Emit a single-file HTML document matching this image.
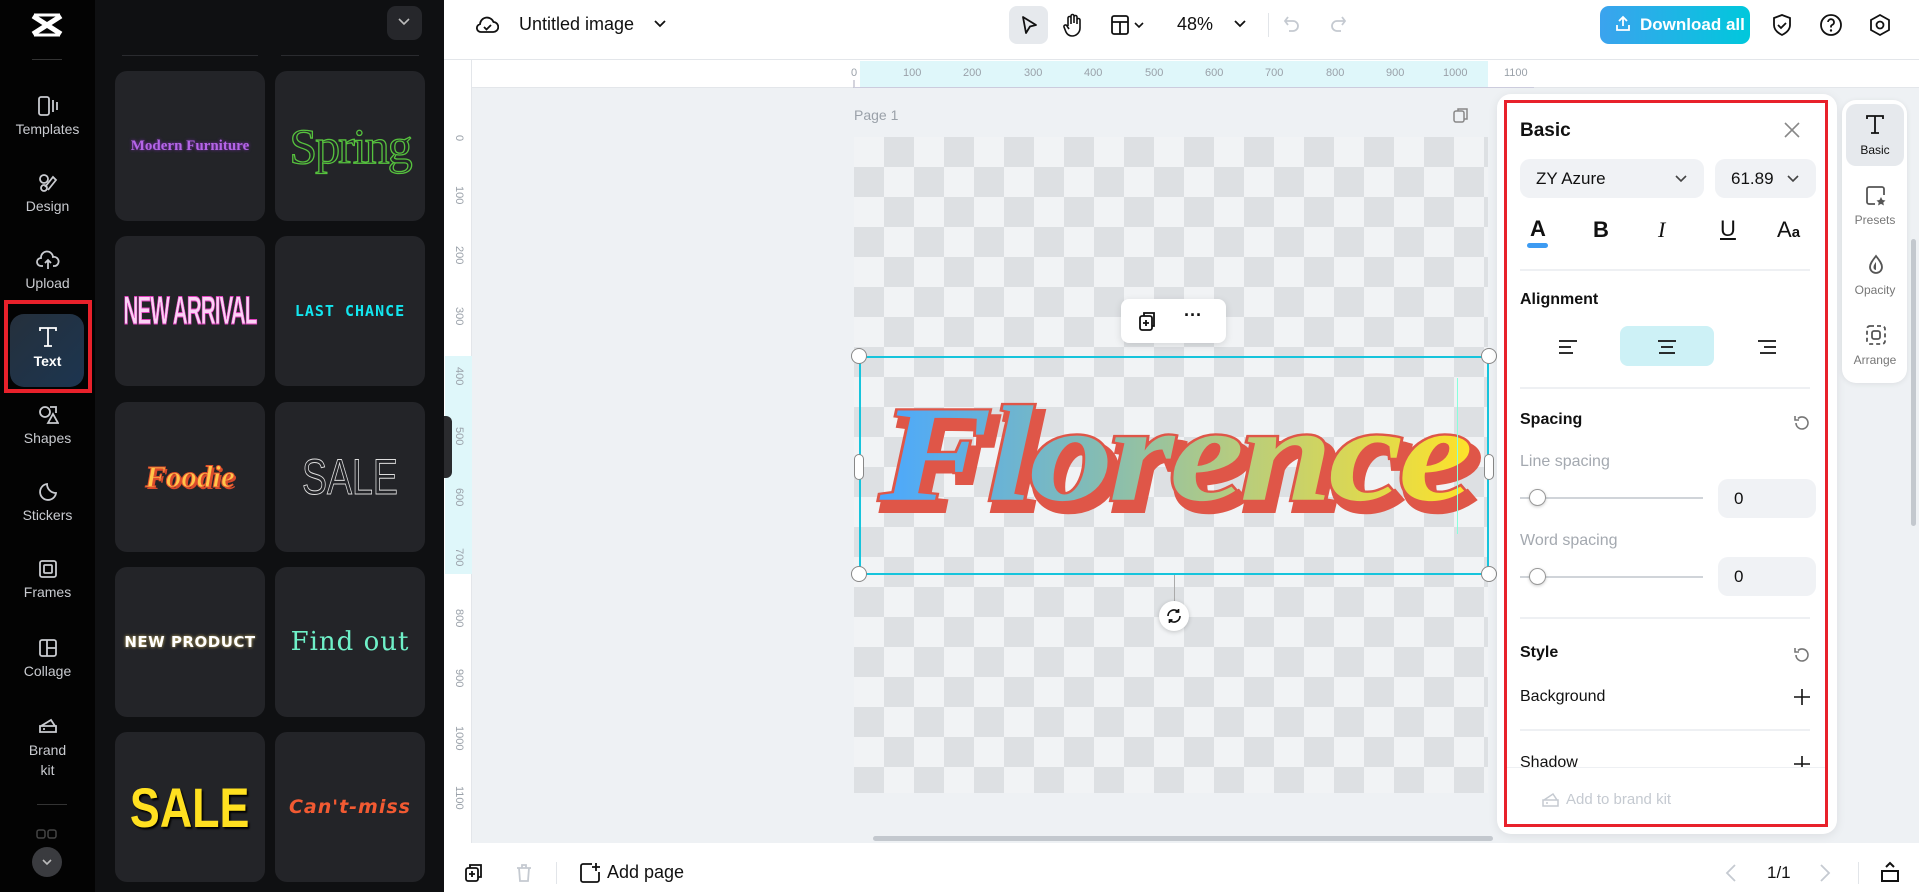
<!DOCTYPE html>
<html><head><meta charset="utf-8">
<style>
*{box-sizing:border-box;margin:0;padding:0}
body{width:1919px;height:892px;overflow:hidden;position:relative;font-family:"Liberation Sans",sans-serif;background:#eef1f4}
.a{position:absolute}
.nav{left:0;top:0;width:95px;height:892px;background:#030303}
.ni{position:absolute;left:0;width:95px;text-align:center;color:#c9cbd0;font-size:14px}
.ni svg{display:block;margin:0 auto 4px}
.panel{left:95px;top:0;width:349px;height:892px;background:#0f1012}
.card{position:absolute;width:150px;height:150px;background:#232428;border-radius:12px;display:flex;align-items:center;justify-content:center;overflow:hidden}
.card span{display:inline-block;white-space:nowrap}
.top{left:444px;top:0;width:1475px;height:60px;background:#fff;border-bottom:1px solid #e3e6ea}
.rp{left:1504px;top:100px;width:324px;height:727px;background:#fff;border:3px solid #e8212b}
.lbl{position:absolute;left:13px;font-size:16px;color:#111;font-weight:bold}
.dv{position:absolute;left:13px;width:290px;height:2px;background:#eef0f3}
.in{position:absolute;background:#f0f2f5;border-radius:10px;font-size:17px;color:#111}
</style></head><body>

<div class="a nav">
 <svg class="a" style="left:30px;top:12px" width="34" height="26" viewBox="0 0 34 26"><path d="M3 4 L31 22 M31 4 L3 22" stroke="#fff" stroke-width="5"/><path d="M4 3h26M4 23h26" stroke="#fff" stroke-width="3"/></svg>
 <div class="a" style="left:32px;top:59px;width:30px;height:1px;background:#333"></div>
 <div class="ni" style="top:95px"><svg width="22" height="22" viewBox="0 0 22 22" fill="none" stroke="#c9cbd0" stroke-width="1.8"><rect x="2" y="2" width="10" height="18" rx="2"/><path d="M16 5v12M20 7v8"/></svg>Templates</div>
 <div class="ni" style="top:172px"><svg width="22" height="22" viewBox="0 0 22 22" fill="none" stroke="#c9cbd0" stroke-width="1.8"><circle cx="7" cy="7" r="4"/><circle cx="7" cy="16" r="3"/><path d="M11 18l8-10-3-3-8 10"/></svg>Design</div>
 <div class="ni" style="top:249px"><svg width="24" height="22" viewBox="0 0 24 22" fill="none" stroke="#c9cbd0" stroke-width="1.8"><path d="M7 17H5a4 4 0 0 1 0-8 6 6 0 0 1 12-1 4.5 4.5 0 0 1 2 9h-2M12 20v-9M9 14l3-3 3 3"/></svg>Upload</div>
 <div class="a" style="left:4px;top:300px;width:88px;height:93px;border:4px solid #e8212b"></div>
 <div class="a" style="left:10px;top:314px;width:74px;height:73px;border-radius:14px;background:linear-gradient(135deg,#25303c,#1c3550)"></div>
 <div class="ni" style="top:325px;color:#fff;font-weight:bold"><svg width="24" height="24" viewBox="0 0 24 24" fill="none" stroke="#fff" stroke-width="1.8"><path d="M4 6V3h16v3M12 3v18M8 21h8"/></svg>Text</div>
 <div class="ni" style="top:404px"><svg width="22" height="22" viewBox="0 0 22 22" fill="none" stroke="#c9cbd0" stroke-width="1.8"><circle cx="8" cy="8" r="5"/><path d="M13 3h6v6M11 19l5-9 5 9z"/></svg>Shapes</div>
 <div class="ni" style="top:481px"><svg width="22" height="22" viewBox="0 0 22 22" fill="none" stroke="#c9cbd0" stroke-width="1.8"><path d="M19 12a8 8 0 1 1-9-9c0 5 4 9 9 9zM10 3a9 9 0 0 0 9 9"/></svg>Stickers</div>
 <div class="ni" style="top:558px"><svg width="22" height="22" viewBox="0 0 22 22" fill="none" stroke="#c9cbd0" stroke-width="1.8"><rect x="3" y="3" width="16" height="16" rx="2"/><rect x="7" y="7" width="8" height="8" rx="1"/></svg>Frames</div>
 <div class="ni" style="top:637px"><svg width="22" height="22" viewBox="0 0 22 22" fill="none" stroke="#c9cbd0" stroke-width="1.8"><rect x="3" y="3" width="16" height="16" rx="2"/><path d="M10 3v16M10 11h9"/></svg>Collage</div>
 <div class="ni" style="top:714px;line-height:20px"><svg width="22" height="22" viewBox="0 0 22 22" fill="none" stroke="#c9cbd0" stroke-width="1.8"><path d="M3 12h16v6H3zM4 12l10-6 4 6M6 15h2"/></svg>Brand<br>kit</div>
 <div class="a" style="left:37px;top:804px;width:30px;height:1px;background:#333"></div>
 <svg class="a" style="left:36px;top:829px" width="22" height="14"><rect x="1" y="1" width="8" height="8" rx="2" fill="none" stroke="#444" stroke-width="1.5"/><rect x="12" y="1" width="8" height="8" rx="2" fill="none" stroke="#444" stroke-width="1.5"/></svg>
 <div class="a" style="left:32px;top:847px;width:30px;height:30px;border-radius:50%;background:#3a3b3f"></div>
 <svg class="a" style="left:40px;top:857px" width="14" height="10"><path d="M3 3l4 4 4-4" stroke="#bbb" stroke-width="1.6" fill="none"/></svg>
</div>

<div class="a panel">
 <div class="a" style="left:292px;top:6px;width:35px;height:34px;border-radius:9px;background:#26272b"></div>
 <svg class="a" style="left:302px;top:17px" width="14" height="10"><path d="M2 2l5 5 5-5" stroke="#bbb" stroke-width="1.6" fill="none"/></svg>
 <div class="a" style="left:27px;top:55px;width:136px;height:1px;background:#2a2b2f"></div>
 <div class="a" style="left:186px;top:55px;width:138px;height:1px;background:#2a2b2f"></div>
</div>
<div class="card" style="left:115px;top:71px"><span style="font-family:'Liberation Serif',serif;font-weight:bold;color:#b565e8;font-size:15px;text-shadow:0 0 3px #7a2fb0">Modern Furniture</span></div>
<div class="card" style="left:275px;top:71px"><span style="font-family:'Liberation Serif',serif;color:transparent;-webkit-text-stroke:1.3px #56c23e;font-size:50px;letter-spacing:-2px">Spring</span></div>
<div class="card" style="left:115px;top:236px"><span style="font-family:'Liberation Sans',sans-serif;font-weight:bold;color:#fbd3f5;font-size:40px;letter-spacing:-2px;transform:scaleX(.52);-webkit-text-stroke:1px #e040c0">NEW ARRIVAL</span></div>
<div class="card" style="left:275px;top:236px"><span style="font-family:'DejaVu Sans Mono',monospace;font-weight:bold;color:#13e6ef;font-size:15px;letter-spacing:1px">LAST CHANCE</span></div>
<div class="card" style="left:115px;top:402px"><span style="font-family:'Liberation Serif',serif;font-weight:bold;font-style:italic;color:#ffc54a;font-size:31px;-webkit-text-stroke:1px #e0502c;text-shadow:2px 2px 0 #d94a2c">Foodie</span></div>
<div class="card" style="left:275px;top:402px"><span style="font-family:'Liberation Sans',sans-serif;color:transparent;-webkit-text-stroke:1px #ddd;font-size:50px;transform:scaleX(.75)">SALE</span></div>
<div class="card" style="left:115px;top:567px"><span style="font-family:'DejaVu Sans',sans-serif;font-weight:bold;color:#fff;font-size:15px;text-shadow:0 0 3px #c8b060;letter-spacing:.5px">NEW PRODUCT</span></div>
<div class="card" style="left:275px;top:567px"><span style="font-family:'DejaVu Serif',serif;color:#6ff0c8;font-size:26px;letter-spacing:1px">Find out</span></div>
<div class="card" style="left:115px;top:732px"><span style="font-family:'Liberation Sans',sans-serif;font-weight:bold;color:#ffe020;font-size:56px;text-shadow:2px 2px 2px #000;transform:scaleX(.8)">SALE</span></div>
<div class="card" style="left:275px;top:732px"><span style="font-family:'DejaVu Sans',sans-serif;font-weight:bold;font-style:italic;color:#f25a32;font-size:19px;letter-spacing:1px">Can't-miss</span></div>

<div class="a top"></div>
<svg class="a" style="left:475px;top:13px" width="24" height="24" viewBox="0 0 24 24"><path d="M7 19H6a4 4 0 0 1-1-7.9A7 7 0 0 1 18.5 9 5 5 0 0 1 18 19zM9 14l2.5 2.5L16 12" stroke="#111" stroke-width="1.8" fill="none"/></svg>
<div class="a" style="left:519px;top:14px;font-size:18px;color:#111">Untitled image</div>
<svg class="a" style="left:653px;top:19px" width="14" height="10"><path d="M2 2l5 5 5-5" stroke="#111" stroke-width="1.8" fill="none"/></svg>
<div class="a" style="left:1009px;top:6px;width:39px;height:38px;border-radius:8px;background:#e6e9ed"></div>
<svg class="a" style="left:1018px;top:14px" width="22" height="22" viewBox="0 0 22 22"><path d="M5 3l13 8-6 1.5L8 19z" stroke="#111" stroke-width="1.8" fill="none" stroke-linejoin="round"/></svg>
<svg class="a" style="left:1062px;top:12px" width="22" height="26" viewBox="0 0 22 26"><path d="M6 14V6a1.5 1.5 0 0 1 3 0v6M9 11V4a1.5 1.5 0 0 1 3 0v7M12 11V5a1.5 1.5 0 0 1 3 0v7M15 12V8a1.5 1.5 0 0 1 3 0v8a8 8 0 0 1-8 8 7 7 0 0 1-6-4l-2-5a1.5 1.5 0 0 1 3-1l2 3" stroke="#111" stroke-width="1.6" fill="none"/></svg>
<svg class="a" style="left:1110px;top:14px" width="40" height="22"><rect x="2" y="2" width="16" height="18" rx="2" stroke="#111" stroke-width="1.8" fill="none"/><path d="M2 8h16M10 8v12" stroke="#111" stroke-width="1.8"/><path d="M25 9l4 4 4-4" stroke="#111" stroke-width="1.6" fill="none"/></svg>
<div class="a" style="left:1177px;top:14px;font-size:18px;color:#111">48%</div>
<svg class="a" style="left:1233px;top:19px" width="14" height="10"><path d="M2 2l5 5 5-5" stroke="#111" stroke-width="1.8" fill="none"/></svg>
<div class="a" style="left:1268px;top:13px;width:1px;height:24px;background:#e2e5e9"></div>
<svg class="a" style="left:1282px;top:14px" width="72" height="22"><path d="M6 3L3 7l3 4M3 7h8a5 5 0 0 1 0 10H7" stroke="#c5cad1" stroke-width="1.8" fill="none"/><path d="M60 3l3 4-3 4M63 7h-8a5 5 0 0 0 0 10h4" stroke="#c5cad1" stroke-width="1.8" fill="none"/></svg>
<div class="a" style="left:1600px;top:6px;width:150px;height:38px;border-radius:9px;background:linear-gradient(90deg,#3ba3ee,#00c8dc);color:#fff;font-weight:bold;font-size:17px;line-height:38px;padding-left:40px">Download all</div>
<svg class="a" style="left:1614px;top:15px" width="18" height="18" viewBox="0 0 18 18"><path d="M9 11V2M5 6l4-4 4 4M3 10v5h12v-5" stroke="#fff" stroke-width="1.8" fill="none"/></svg>
<svg class="a" style="left:1770px;top:13px" width="24" height="24" viewBox="0 0 24 24"><path d="M12 2l8 3v7c0 5-4 8-8 10-4-2-8-5-8-10V5z M8 12l3 3 5-5" stroke="#111" stroke-width="1.8" fill="none"/></svg>
<svg class="a" style="left:1819px;top:13px" width="24" height="24" viewBox="0 0 24 24"><circle cx="12" cy="12" r="10" stroke="#111" stroke-width="1.8" fill="none"/><path d="M9 9a3 3 0 1 1 4 3c-1 .5-1 1-1 2.5" stroke="#111" stroke-width="1.8" fill="none"/><circle cx="12" cy="17.5" r="1.2" fill="#111"/></svg>
<svg class="a" style="left:1868px;top:13px" width="24" height="24" viewBox="0 0 24 24"><path d="M12 2l9 5v10l-9 5-9-5V7z" stroke="#111" stroke-width="1.8" fill="none"/><circle cx="12" cy="12" r="3.5" stroke="#111" stroke-width="1.8" fill="none"/></svg>

<div class="a" style="left:444px;top:60px;width:1475px;height:28px;background:#fff;border-bottom:1px solid #e3e6ea"></div>
<div class="a" style="left:444px;top:60px;width:28px;height:783px;background:#fff;border-right:1px solid #e3e6ea"></div>
<div class="a" style="left:860px;top:61px;width:628px;height:27px;background:#dff7fa"></div>
<div class="a" style="left:445px;top:356px;width:27px;height:218px;background:#dff7fa"></div>
<svg class="a" style="left:472px;top:60px" width="1447" height="28">
 <g font-family="Liberation Sans" font-size="11" fill="#9aa1a9">
  <text x="379" y="16">0</text><text x="431" y="16">100</text><text x="491" y="16">200</text><text x="552" y="16">300</text><text x="612" y="16">400</text><text x="673" y="16">500</text><text x="733" y="16">600</text><text x="793" y="16">700</text><text x="854" y="16">800</text><text x="914" y="16">900</text><text x="971" y="16">1000</text><text x="1032" y="16">1100</text>
 </g>
 <path d="M382 20v8" stroke="#aab" stroke-width="1"/>
 <path d="M382 27.5h680" stroke="#ccd" stroke-width="1"/>
</svg>
<svg class="a" style="left:444px;top:88px" width="28" height="755">
 <g font-family="Liberation Sans" font-size="11" fill="#9aa1a9">
  <text transform="translate(12,47) rotate(90)">0</text>
  <text transform="translate(12,98) rotate(90)">100</text><text transform="translate(12,158) rotate(90)">200</text><text transform="translate(12,219) rotate(90)">300</text><text transform="translate(12,279) rotate(90)">400</text><text transform="translate(12,339) rotate(90)">500</text><text transform="translate(12,400) rotate(90)">600</text><text transform="translate(12,460) rotate(90)">700</text><text transform="translate(12,521) rotate(90)">800</text><text transform="translate(12,581) rotate(90)">900</text><text transform="translate(12,638) rotate(90)">1000</text><text transform="translate(12,698) rotate(90)">1100</text>
 </g>
</svg>
<div class="a" style="left:444px;top:416px;width:8px;height:62px;background:#2a2b2e;border-radius:0 6px 6px 0"></div>

<div class="a" style="left:854px;top:107px;font-size:14px;color:#9aa1a9">Page 1</div>
<svg class="a" style="left:1452px;top:106px" width="18" height="18"><rect x="2" y="5" width="10" height="11" rx="2" stroke="#888" stroke-width="1.5" fill="none"/><path d="M6 5V3h9v10h-3" stroke="#888" stroke-width="1.5" fill="none"/></svg>
<div class="a" style="left:854px;top:137px;width:634px;height:656px;background-color:#f1f3f5;background-image:linear-gradient(45deg,#dde0e3 25%,transparent 25%,transparent 75%,#dde0e3 75%),linear-gradient(45deg,#dde0e3 25%,transparent 25%,transparent 75%,#dde0e3 75%);background-size:60px 60px;background-position:0 0,30px 30px"></div>

<div class="a" style="left:1121px;top:299px;width:105px;height:44px;background:#fff;border-radius:8px;box-shadow:0 2px 8px rgba(0,0,0,.12)"></div>
<svg class="a" style="left:1138px;top:310px" width="20" height="22"><rect x="2" y="6" width="12" height="14" rx="2" stroke="#111" stroke-width="1.8" fill="none"/><path d="M6 6V3h10v13h-2M8 10v6M5 13h6" stroke="#111" stroke-width="1.8" fill="none"/></svg>
<div class="a" style="left:1184px;top:305px;font-size:18px;font-weight:bold;color:#111">···</div>
<svg class="a" style="left:840px;top:340px" width="680" height="300">
 <defs><linearGradient id="g" x1="0" x2="1"><stop offset="0" stop-color="#4aa8ff"/><stop offset=".35" stop-color="#80bbb8"/><stop offset=".6" stop-color="#b5cc80"/><stop offset="1" stop-color="#fde22a"/></linearGradient></defs>
 <g transform="translate(334,0) scale(1.16,0.94) translate(-334,0)">
 <text x="334" y="170" text-anchor="middle" font-family="Liberation Serif" font-style="italic" font-weight="bold" font-size="145" fill="#df5648" stroke="#df5648" stroke-width="10" letter-spacing="-4" transform="translate(5,9)">Florence</text>
 <text x="334" y="170" text-anchor="middle" font-family="Liberation Serif" font-style="italic" font-weight="bold" font-size="145" fill="url(#g)" stroke="#df5648" stroke-width="5" paint-order="stroke" letter-spacing="-4">Florence</text>
 </g>
</svg>
<div class="a" style="left:1457px;top:378px;width:1px;height:156px;background:#8fd"></div>
<div class="a" style="left:859px;top:356px;width:630px;height:219px;border:2px solid #16c4dc"></div>
<div class="a" style="left:851px;top:348px;width:16px;height:16px;border-radius:50%;background:#fff;border:1.5px solid #888"></div>
<div class="a" style="left:1481px;top:348px;width:16px;height:16px;border-radius:50%;background:#fff;border:1.5px solid #888"></div>
<div class="a" style="left:851px;top:566px;width:16px;height:16px;border-radius:50%;background:#fff;border:1.5px solid #888"></div>
<div class="a" style="left:1481px;top:566px;width:16px;height:16px;border-radius:50%;background:#fff;border:1.5px solid #888"></div>
<div class="a" style="left:854px;top:454px;width:10px;height:26px;border-radius:5px;background:#fff;border:1.5px solid #888"></div>
<div class="a" style="left:1484px;top:454px;width:10px;height:26px;border-radius:5px;background:#fff;border:1.5px solid #888"></div>
<div class="a" style="left:1174px;top:575px;width:1px;height:26px;background:#aaa"></div>
<div class="a" style="left:1159px;top:601px;width:30px;height:30px;border-radius:50%;background:#fff;box-shadow:0 1px 5px rgba(0,0,0,.2)"></div>
<svg class="a" style="left:1165px;top:607px" width="18" height="18" viewBox="0 0 18 18"><path d="M3 9a6 6 0 0 1 10.5-4M15 9a6 6 0 0 1-10.5 4M13.5 2v3h-3M4.5 16v-3h3" stroke="#111" stroke-width="1.7" fill="none"/></svg>

<div class="a" style="left:873px;top:836px;width:620px;height:5px;border-radius:3px;background:#c3c8ce"></div>
<div class="a" style="left:1911px;top:239px;width:5px;height:287px;border-radius:3px;background:#c3c8ce"></div>

<div class="a" style="left:444px;top:843px;width:1475px;height:49px;background:#fff"></div>
<svg class="a" style="left:464px;top:862px" width="22" height="22"><rect x="2" y="6" width="12" height="13" rx="2" stroke="#111" stroke-width="1.8" fill="none"/><path d="M6 6V3h11v12h-3M8 9v6M5 12h6" stroke="#111" stroke-width="1.8" fill="none"/></svg>
<svg class="a" style="left:514px;top:862px" width="20" height="22"><path d="M3 6h14M8 6V3h4v3M5 6l1 13h8l1-13" stroke="#c5cad1" stroke-width="1.8" fill="none"/></svg>
<div class="a" style="left:556px;top:862px;width:1px;height:22px;background:#e2e5e9"></div>
<svg class="a" style="left:578px;top:861px" width="24" height="24"><path d="M14 3H5a2 2 0 0 0-2 2v14a2 2 0 0 0 2 2h14a2 2 0 0 0 2-2v-8M18 2v8M14 6h8" stroke="#111" stroke-width="1.8" fill="none"/></svg>
<div class="a" style="left:607px;top:862px;font-size:18px;color:#111">Add page</div>
<svg class="a" style="left:1724px;top:863px" width="14" height="20"><path d="M11 2L3 10l8 8" stroke="#c5cad1" stroke-width="1.8" fill="none"/></svg>
<div class="a" style="left:1767px;top:863px;font-size:17px;color:#111">1/1</div>
<svg class="a" style="left:1818px;top:863px" width="14" height="20"><path d="M3 2l8 8-8 8" stroke="#c5cad1" stroke-width="1.8" fill="none"/></svg>
<div class="a" style="left:1858px;top:862px;width:1px;height:22px;background:#e2e5e9"></div>
<svg class="a" style="left:1879px;top:860px" width="22" height="24"><path d="M3 11h16v10H3zM7 7l4-4 4 4" stroke="#111" stroke-width="2" fill="none"/></svg>

<div class="a" style="left:1497px;top:94px;width:340px;height:740px;border-radius:14px;background:#fff;box-shadow:0 2px 10px rgba(0,0,0,.08)"></div>
<div class="a rp">
 <div class="lbl" style="top:17px;font-size:19px">Basic</div>
 <svg class="a" style="left:276px;top:18px" width="18" height="18"><path d="M2 2l14 14M16 2L2 16" stroke="#888" stroke-width="1.6"/></svg>
 <div class="in" style="left:13px;top:56px;width:184px;height:39px;line-height:39px;padding-left:16px">ZY Azure</div>
 <svg class="a" style="left:167px;top:71px" width="14" height="10"><path d="M2 2l5 5 5-5" stroke="#444" stroke-width="1.6" fill="none"/></svg>
 <div class="in" style="left:208px;top:56px;width:101px;height:39px;line-height:39px;padding-left:16px">61.89</div>
 <svg class="a" style="left:279px;top:71px" width="14" height="10"><path d="M2 2l5 5 5-5" stroke="#444" stroke-width="1.6" fill="none"/></svg>
 <div class="a" style="left:23px;top:113px;font-size:22px;font-weight:bold;color:#111">A</div>
 <div class="a" style="left:20px;top:140px;width:21px;height:5px;border-radius:3px;background:#3d9bf2"></div>
 <div class="a" style="left:86px;top:114px;font-size:22px;font-weight:bold;color:#111">B</div>
 <div class="a" style="left:151px;top:114px;font-size:22px;font-style:italic;font-family:'Liberation Serif',serif;color:#111">I</div>
 <div class="a" style="left:213px;top:113px;font-size:22px;color:#111;text-decoration:underline">U</div>
 <div class="a" style="left:270px;top:114px;font-size:22px;color:#111">A<span style="font-size:15px;font-weight:bold">a</span></div>
 <div class="dv" style="top:166px"></div>
 <div class="lbl" style="top:188px">Alignment</div>
 <div class="a" style="left:113px;top:223px;width:94px;height:40px;border-radius:8px;background:#cdf1f6"></div>
 <svg class="a" style="left:50px;top:236px" width="240" height="16"><path d="M2 2h18M2 8h12M2 14h14" stroke="#111" stroke-width="1.8"/><path d="M101 2h18M104 8h12M102 14h16" stroke="#111" stroke-width="1.8"/><path d="M201 2h18M207 8h12M203 14h16" stroke="#111" stroke-width="1.8"/></svg>
 <div class="dv" style="top:284px"></div>
 <div class="lbl" style="top:308px">Spacing</div>
 <svg class="a" style="left:285px;top:311px" width="18" height="18"><path d="M4 9a6 6 0 1 0 2-4.5M3 2v4h4" stroke="#777" stroke-width="1.6" fill="none"/></svg>
 <div class="a" style="left:13px;top:350px;font-size:16px;color:#a4a9b0">Line spacing</div>
 <div class="a" style="left:13px;top:394px;width:183px;height:2px;background:#d0d4d9"></div>
 <div class="a" style="left:22px;top:386px;width:17px;height:17px;border-radius:50%;background:#fff;border:1.5px solid #999;box-shadow:0 1px 3px rgba(0,0,0,.2)"></div>
 <div class="in" style="left:211px;top:376px;width:98px;height:39px;line-height:39px;padding-left:16px">0</div>
 <div class="a" style="left:13px;top:429px;font-size:16px;color:#a4a9b0">Word spacing</div>
 <div class="a" style="left:13px;top:473px;width:183px;height:2px;background:#d0d4d9"></div>
 <div class="a" style="left:22px;top:465px;width:17px;height:17px;border-radius:50%;background:#fff;border:1.5px solid #999;box-shadow:0 1px 3px rgba(0,0,0,.2)"></div>
 <div class="in" style="left:211px;top:454px;width:98px;height:39px;line-height:39px;padding-left:16px">0</div>
 <div class="dv" style="top:514px"></div>
 <div class="lbl" style="top:541px">Style</div>
 <svg class="a" style="left:285px;top:543px" width="18" height="18"><path d="M4 9a6 6 0 1 0 2-4.5M3 2v4h4" stroke="#777" stroke-width="1.6" fill="none"/></svg>
 <div class="a" style="left:13px;top:585px;font-size:16px;color:#111">Background</div>
 <svg class="a" style="left:286px;top:585px" width="18" height="18"><path d="M9 1v16M1 9h16" stroke="#111" stroke-width="1.6"/></svg>
 <div class="dv" style="top:626px"></div>
 <div style="position:absolute;left:0;top:640px;width:318px;height:24px;overflow:hidden">
  <div class="a" style="left:13px;top:11px;font-size:16px;color:#111">Shadow</div>
  <svg class="a" style="left:286px;top:12px" width="18" height="18"><path d="M9 1v16M1 9h16" stroke="#111" stroke-width="1.6"/></svg>
 </div>
 <div class="a" style="left:0;top:664px;width:318px;height:1px;background:#eef0f3"></div>
 <svg class="a" style="left:34px;top:688px" width="20" height="18"><path d="M2 9h15v6H2zM3 9l9-6 4 6M5 12h2" stroke="#c5cad1" stroke-width="1.5" fill="none"/></svg>
 <div class="a" style="left:59px;top:688px;font-size:15px;color:#c5cad1">Add to brand kit</div>
</div>

<div class="a" style="left:1842px;top:100px;width:65px;height:283px;border-radius:14px;background:#fff;box-shadow:0 1px 6px rgba(0,0,0,.08)"></div>
<div class="a" style="left:1846px;top:104px;width:58px;height:62px;border-radius:10px;background:#e6e9ed"></div>
<svg class="a" style="left:1864px;top:113px" width="22" height="22"><path d="M3 6V3h16v3M11 3v17M7 20h8" stroke="#111" stroke-width="1.8" fill="none"/></svg>
<div class="a" style="left:1846px;top:143px;width:58px;text-align:center;font-size:12px;color:#111">Basic</div>
<svg class="a" style="left:1865px;top:185px" width="22" height="22"><path d="M10 19H4a2 2 0 0 1-2-2V4a2 2 0 0 1 2-2h13a2 2 0 0 1 2 2v6" stroke="#555" stroke-width="1.8" fill="none"/><path d="M16 12l1.5 3 3 .5-2.2 2 .6 3-2.9-1.6-2.9 1.6.6-3-2.2-2 3-.5z" fill="#555"/></svg>
<div class="a" style="left:1846px;top:213px;width:58px;text-align:center;font-size:12px;color:#777">Presets</div>
<svg class="a" style="left:1866px;top:254px" width="20" height="22"><path d="M10 2C6 7 4 10 4 13a6 6 0 0 0 12 0c0-3-2-6-6-11z" stroke="#555" stroke-width="1.8" fill="none"/><path d="M10 8c-2 2.5-2.5 4-2.5 5.5A2.5 2.5 0 0 0 10 16z" fill="#555"/></svg>
<div class="a" style="left:1846px;top:283px;width:58px;text-align:center;font-size:12px;color:#777">Opacity</div>
<svg class="a" style="left:1865px;top:324px" width="22" height="22"><rect x="2" y="2" width="18" height="18" rx="3" stroke="#555" stroke-width="1.8" fill="none" stroke-dasharray="4 3"/><rect x="7" y="7" width="8" height="8" rx="2" stroke="#555" stroke-width="1.8" fill="none"/></svg>
<div class="a" style="left:1846px;top:353px;width:58px;text-align:center;font-size:12px;color:#777">Arrange</div>

</body></html>
